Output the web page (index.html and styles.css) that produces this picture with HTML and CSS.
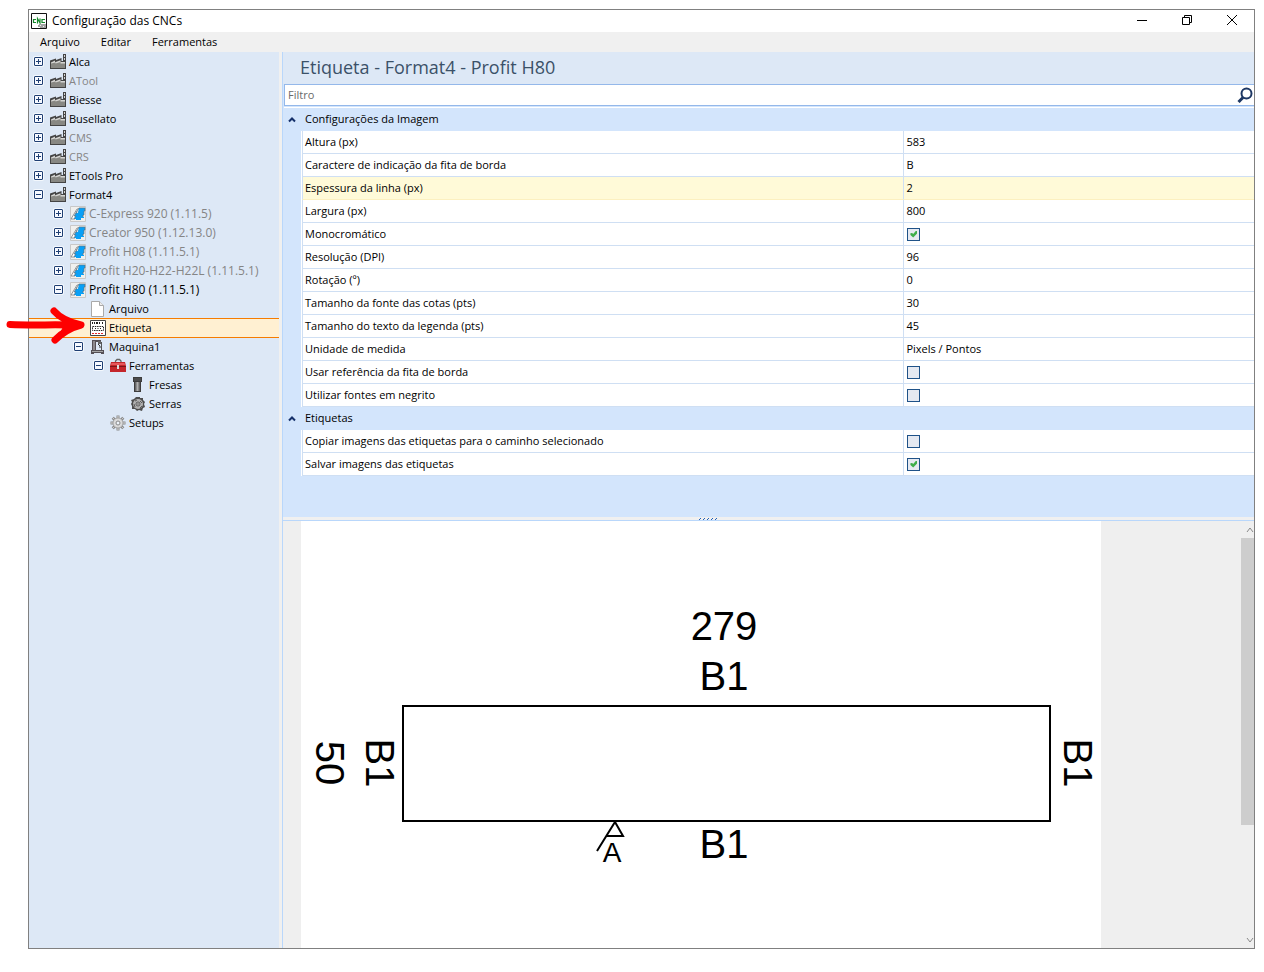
FILE: index.html
```html
<!DOCTYPE html>
<html lang="pt-BR">
<head>
<meta charset="utf-8">
<meta name="viewport" content="width=device-width, initial-scale=1">
<title>Configuração das CNCs</title>
<link rel="stylesheet" href="styles.css">
</head>
<body>
<svg class="sprite" aria-hidden="true">
  <defs>
    <linearGradient id="steel" x1="0" y1="0" x2="1" y2="0"><stop offset="0" stop-color="#555"/><stop offset=".5" stop-color="#b0b0b0"/><stop offset="1" stop-color="#555"/></linearGradient>
  </defs>
  <symbol id="factory" viewBox="0 0 16 16">
    <path d="M0 15V6.500L6 4.500V6l5.500-2v3H13V0h3v15z" fill="#454545"/>
    <path d="M1 8.500L5 6.500v1.700l5.500-2V8H15v2H1z" fill="#d6d6d3"/>
    <path d="M1 9.500l4.500-1v1L10.500 8v1.500H15V14H1z" fill="#888883"/>
    <path d="M14 1h1v2h-1zm0 3h1v2h-1z" fill="#d5d5d5"/>
    <path d="M0 14h16v1H0z" fill="#444"/>
  </symbol>
  <symbol id="brand" viewBox="0 0 16 16">
    <path d="M.5.5h15v15H.5z" fill="#f0f0ee" stroke="#c8c8c8"/>
    <path d="M1 13L7 3h3L5 13z" fill="#fff" stroke="#7d7d7d" stroke-width=".8"/>
    <path d="M9 2h6v3h-1v4h-1v2h1v1h-3v2H6v-1H4l1.500-3H4l2-3h2z" fill="#09a0f6"/>
    <path d="M9 2L4 10h2l-2 3M7 5l-1 3M9 2h6v3h-1v4h-1v2" fill="none" stroke="#5f7482" stroke-width=".7"/>
  </symbol>
  <symbol id="file" viewBox="0 0 16 16">
    <path d="M1.500.5h8l4 4v11h-12z" fill="#fff" stroke="#a9a9a9"/>
    <path d="M9.500.5v4h4" fill="#eee" stroke="#a9a9a9"/>
  </symbol>
  <symbol id="tag" viewBox="0 0 16 16">
    <path d="M.5.5h15v15H.5z" fill="#fff" stroke="#444"/>
    <path d="M2.500 2v2m2-2v2m2-2v2m1-2v2m2-2v2m3-2v2" stroke="#222"/>
    <path d="M2.500 6.500h11v4h-11z" stroke="#222" stroke-dasharray="1.500 .8" fill="none"/>
    <path d="M5 8.500h1m1.500 0h1m1.500 0h1" stroke="#222"/>
    <path d="M2 13.500h12" stroke="#e22a2a" stroke-dasharray="2 1"/>
  </symbol>
  <symbol id="machine" viewBox="0 0 16 16">
    <path d="M2 1h9v2H6v8h8v4h-3v-1H4v1H1v-4h1z" fill="#544f55"/>
    <path d="M3 2h2v9H3z" fill="#8d8a8e"/>
    <path d="M8 2h3v3H8z" fill="#666"/><path d="M8 5l2 2v2" fill="none" stroke="#333"/>
    <path d="M11.500 3v8" stroke="#555"/>
    <path d="M2 12.500h11" stroke="#a5a5a5"/>
  </symbol>
  <symbol id="toolbox" viewBox="0 0 16 16">
    <path d="M5.500 5V3L7 1.500h2.500L11 3v2" fill="none" stroke="#666" stroke-width="1.300"/>
    <path d="M1 4h14l1 4v6H0V8z" fill="#c4262b"/>
    <path d="M1.500 5h13l.5 2H1z" fill="#e5575a"/><path d="M0 8h16v1H0z" fill="#7b1519"/>
    <path d="M7 7h2v4H7z" fill="#ddd"/>
  </symbol>
  <symbol id="mill" viewBox="0 0 16 16">
    <path d="M3 0h9v5h-1v10H4V5H3z" fill="#3d3d3d"/><path d="M5 5h5v9H5z" fill="url(#steel)"/>
    <path d="M4 1h7v3H4z" fill="#4c4c4c"/>
  </symbol>
  <symbol id="saw" viewBox="0 0 16 16">
    <path d="M6 1h4v1h3v2l2 2-1 2 1 3-2 1-1 3-3-1-2 1-2-2H2v-3L1 8l1-2-1-2 3-1z" fill="#4d4d4d"/>
    <circle cx="8" cy="8" r="5" fill="#b0b0b0"/>
    <path d="M5 5l2-1m3 1l2 2M4 8l1 3m7-1l-2 2" stroke="#5a5a5a"/>
    <circle cx="8" cy="8" r="2" fill="#ddd" stroke="#555"/><circle cx="8" cy="8" r=".8" fill="#333"/>
  </symbol>
  <symbol id="gear" viewBox="0 0 16 16">
    <g stroke="#8b8b8b" stroke-width="3"><path d="M8 .5v15M.5 8h15M2.700 2.700l10.600 10.600M13.300 2.700L2.700 13.300"/></g>
    <g stroke="#dadada"><path d="M8 1v14M1 8h14M3.200 3.200l9.600 9.600M12.800 3.200l-9.600 9.600"/></g>
    <circle cx="8" cy="8" r="5" fill="#dadada" stroke="#999" stroke-width=".8"/>
    <circle cx="8" cy="8" r="2" fill="#eef3fa" stroke="#888"/>
  </symbol>
</svg>

<div class="window">
  <header class="titlebar">
    <svg class="app-icon" viewBox="0 0 16 16" aria-hidden="true">
      <path d="M.5.5h15v15H.5z" fill="#fff" stroke="#111"/>
      <path d="M5 6.500H2.500v3H5M6.500 10.500v-5l2.500 4.500V5.500M14 6.500h-3v3h3" fill="none" stroke="#16882b" stroke-width="1.200"/>
      <path d="M7 12h1v-1h7v4H9v-1H7z" fill="#a3a3a3"/><path d="M9 12.500h1m2 1h1" stroke="#eee"/>
    </svg>
    <h1>Configuração das CNCs</h1>
    <div class="window-buttons">
      <button type="button" aria-label="Minimizar"><svg viewBox="0 0 12 12"><path d="M1 5.500h10"/></svg></button>
      <button type="button" aria-label="Restaurar"><svg viewBox="0 0 12 12"><path d="M1.500 2.500h7v7h-7zM3.500 2.500v-2h7v7h-2"/></svg></button>
      <button type="button" aria-label="Fechar"><svg viewBox="0 0 12 12"><path d="M1 0l10 10M11 0L1 10"/></svg></button>
    </div>
  </header>
  <nav class="menubar">
    <button type="button">Arquivo</button><button type="button">Editar</button><button type="button">Ferramentas</button>
  </nav>
  <div class="workspace">
    <aside class="sidebar">
      <ul class="tree">
        <li><div class="node l1"><button class="toggle" type="button" aria-label="Expandir"></button><svg><use href="#factory"/></svg><span>Alca</span></div></li>
        <li><div class="node l1 off"><button class="toggle" type="button" aria-label="Expandir"></button><svg><use href="#factory"/></svg><span>ATool</span></div></li>
        <li><div class="node l1"><button class="toggle" type="button" aria-label="Expandir"></button><svg><use href="#factory"/></svg><span>Biesse</span></div></li>
        <li><div class="node l1"><button class="toggle" type="button" aria-label="Expandir"></button><svg><use href="#factory"/></svg><span>Busellato</span></div></li>
        <li><div class="node l1 off"><button class="toggle" type="button" aria-label="Expandir"></button><svg><use href="#factory"/></svg><span>CMS</span></div></li>
        <li><div class="node l1 off"><button class="toggle" type="button" aria-label="Expandir"></button><svg><use href="#factory"/></svg><span>CRS</span></div></li>
        <li><div class="node l1"><button class="toggle" type="button" aria-label="Expandir"></button><svg><use href="#factory"/></svg><span>ETools Pro</span></div></li>
        <li><div class="node l1"><button class="toggle open" type="button" aria-label="Recolher"></button><svg><use href="#factory"/></svg><span>Format4</span></div>
          <ul>
            <li><div class="node l2 off"><button class="toggle" type="button" aria-label="Expandir"></button><svg><use href="#brand"/></svg><span>C-Express 920 (1.11.5)</span></div></li>
            <li><div class="node l2 off"><button class="toggle" type="button" aria-label="Expandir"></button><svg><use href="#brand"/></svg><span>Creator 950 (1.12.13.0)</span></div></li>
            <li><div class="node l2 off"><button class="toggle" type="button" aria-label="Expandir"></button><svg><use href="#brand"/></svg><span>Profit H08 (1.11.5.1)</span></div></li>
            <li><div class="node l2 off"><button class="toggle" type="button" aria-label="Expandir"></button><svg><use href="#brand"/></svg><span>Profit H20-H22-H22L (1.11.5.1)</span></div></li>
            <li><div class="node l2"><button class="toggle open" type="button" aria-label="Recolher"></button><svg><use href="#brand"/></svg><span>Profit H80 (1.11.5.1)</span></div>
              <ul>
                <li><div class="node leaf3"><svg><use href="#file"/></svg><span>Arquivo</span></div></li>
                <li><div class="node leaf3 selected"><svg><use href="#tag"/></svg><span>Etiqueta</span></div></li>
                <li><div class="node l3"><button class="toggle open" type="button" aria-label="Recolher"></button><svg><use href="#machine"/></svg><span>Maquina1</span></div>
                  <ul>
                    <li><div class="node l4"><button class="toggle open" type="button" aria-label="Recolher"></button><svg><use href="#toolbox"/></svg><span>Ferramentas</span></div>
                      <ul>
                        <li><div class="node leaf5"><svg><use href="#mill"/></svg><span>Fresas</span></div></li>
                        <li><div class="node leaf5"><svg><use href="#saw"/></svg><span>Serras</span></div></li>
                      </ul>
                    </li>
                    <li><div class="node leaf4"><svg><use href="#gear"/></svg><span>Setups</span></div></li>
                  </ul>
                </li>
              </ul>
            </li>
          </ul>
        </li>
      </ul>
    </aside>
    <main class="panel">
      <h2>Etiqueta - Format4 - Profit H80</h2>
      <div class="filter">
        <input type="text" placeholder="Filtro" aria-label="Filtro">
        <button type="button" aria-label="Pesquisar"><svg viewBox="0 0 16 16"><circle cx="9.500" cy="6.500" r="5"/><path d="M6 10.500L1.500 15" class="handle"/></svg></button>
      </div>
      <div class="properties">
        <table>
          <colgroup><col class="c-gutter"><col class="c-name"><col class="c-value"></colgroup>
          <tbody>
            <tr class="group"><td><button type="button" aria-label="Recolher grupo"><svg viewBox="0 0 8 6"><path d="M1 4.500l3-3 3 3"/></svg></button></td><th colspan="2">Configurações da Imagem</th></tr>
            <tr><td></td><th>Altura (px)</th><td>583</td></tr>
            <tr><td></td><th>Caractere de indicação da fita de borda</th><td>B</td></tr>
            <tr class="active"><td></td><th>Espessura da linha (px)</th><td>2</td></tr>
            <tr><td></td><th>Largura (px)</th><td>800</td></tr>
            <tr><td></td><th><label for="mono">Monocromático</label></th><td><input type="checkbox" id="mono" checked></td></tr>
            <tr><td></td><th>Resolução (DPI)</th><td>96</td></tr>
            <tr><td></td><th>Rotação (º)</th><td>0</td></tr>
            <tr><td></td><th>Tamanho da fonte das cotas (pts)</th><td>30</td></tr>
            <tr><td></td><th>Tamanho do texto da legenda (pts)</th><td>45</td></tr>
            <tr><td></td><th>Unidade de medida</th><td>Pixels / Pontos</td></tr>
            <tr><td></td><th><label for="ref">Usar referência da fita de borda</label></th><td><input type="checkbox" id="ref"></td></tr>
            <tr><td></td><th><label for="bold">Utilizar fontes em negrito</label></th><td><input type="checkbox" id="bold"></td></tr>
          </tbody>
          <tbody>
            <tr class="group"><td><button type="button" aria-label="Recolher grupo"><svg viewBox="0 0 8 6"><path d="M1 4.500l3-3 3 3"/></svg></button></td><th colspan="2">Etiquetas</th></tr>
            <tr><td></td><th><label for="copy">Copiar imagens das etiquetas para o caminho selecionado</label></th><td><input type="checkbox" id="copy"></td></tr>
            <tr><td></td><th><label for="save">Salvar imagens das etiquetas</label></th><td><input type="checkbox" id="save" checked></td></tr>
          </tbody>
        </table>
      </div>
      <div class="splitter"><svg viewBox="0 0 20 3" aria-hidden="true"><path d="M0 3l2-2M4 3l2-2M8 3l2-2M12 3l2-2M16 3l2-2"/></svg></div>
      <section class="preview">
        <div class="canvas">
          <svg class="label-drawing" viewBox="0 0 800 583" role="img" aria-label="Pré-visualização da etiqueta">
            <rect x="102" y="185" width="647" height="115"/>
            <path d="M296 330L314 301L322 315H305"/>
            <g class="dims">
              <text x="423" y="119">279</text>
              <text x="423" y="169">B1</text>
              <text x="423" y="337">B1</text>
              <text transform="translate(15 242) rotate(90)">50</text>
              <text transform="translate(65 242) rotate(90)">B1</text>
              <text transform="translate(763 242) rotate(90)">B1</text>
              <text class="legend" x="311" y="341">A</text>
            </g>
          </svg>
        </div>
        <div class="scrollbar" aria-hidden="true">
          <svg viewBox="0 0 8 6"><path d="M1 5l3-4 3 4"/></svg>
          <div class="track"><div class="thumb"></div></div>
          <svg viewBox="0 0 8 6"><path d="M1 1l3 4 3-4"/></svg>
        </div>
      </section>
    </main>
  </div>
  <svg class="pointer" viewBox="0 0 80 40" aria-hidden="true">
    <path d="M4 18.500C25 19.500 45 18.500 62 19" stroke-width="7"/>
    <path d="M48 5C54 12 62 16 75 19C63 22 56 27 49 34" stroke-width="7"/>
    <path d="M52 8C60 14 70 17 78 19C68 21 58 25 52 31C56 25 57 22 57 19C57 16 55 12 52 8z" class="tip"/>
  </svg>
</div>
</body>
</html>
```
FILE: styles.css
```css
* { box-sizing: border-box; }

body {
  margin: 0;
  height: 100vh;
  padding: 9px 9px 23px 28px;
  background: #fff;
  color: #000;
  font: 11px/16px "Open Sans", "Noto Sans", sans-serif;
  overflow: hidden;
}

h1, h2, ul { margin: 0; padding: 0; font-weight: 400; list-style: none; }
button { margin: 0; padding: 0; border: 0; background: none; color: inherit; font: inherit; }
svg { display: block; flex: none; fill: none; }

.sprite { position: absolute; width: 0; height: 0; }

.window {
  position: relative;
  display: flex;
  flex-direction: column;
  height: 100%;
  border: 1px solid #808080;
  background: #f0f0f0;
}

.titlebar { display: flex; align-items: center; height: 22px; padding-left: 2px; background: #fff; }
.app-icon { width: 16px; height: 16px; }
.titlebar h1 { flex: 1; padding-left: 5px; font-size: 12px; }
.window-buttons { display: flex; }
.window-buttons button { display: grid; place-items: center; width: 45px; height: 20px; }
.window-buttons svg { width: 12px; height: 12px; stroke: #000; }

.menubar { display: flex; gap: 21px; height: 20px; padding-left: 11px; }
.menubar button { height: 20px; }

.workspace { display: flex; flex: 1; min-height: 0; }

.sidebar { flex: none; width: 250px; background: #dde8f6; }
.node { display: flex; align-items: center; height: 19px; }
.node > svg { width: 16px; height: 16px; margin-right: 3px; }
.l1 { padding-left: 5px; }
.l2 { padding-left: 25px; font-size: 12px; }
.l3 { padding-left: 45px; }
.l4 { padding-left: 65px; }
.leaf3 { padding-left: 61px; }
.leaf4 { padding-left: 81px; }
.leaf5 { padding-left: 101px; }
.off { color: #858585; }
.selected { background: #fff0d2; box-shadow: inset 0 1px #f57c00, 0 1px #f57c00; }

.toggle {
  width: 9px;
  height: 9px;
  margin-right: 7px;
  border: 1px solid #1f3f73;
  border-radius: 1px;
  background:
    linear-gradient(#1f3f73, #1f3f73) center / 5px 1px no-repeat,
    linear-gradient(#1f3f73, #1f3f73) center / 1px 5px no-repeat,
    #f6f9ff;
  box-shadow: 0 0 0 1px #f4f8fd;
}
.toggle.open { background: linear-gradient(#1f3f73, #1f3f73) center / 5px 1px no-repeat, #f6f9ff; }

.panel {
  display: flex;
  flex: 1;
  flex-direction: column;
  min-width: 0;
  margin-left: 3px;
  border-left: 1px solid #b9d7fb;
  background: #d3e5fc;
}
.panel h2 { height: 32px; padding-left: 17px; background: #dde8f6; color: #3b5168; font-size: 18px; line-height: 31px; }

.filter { display: flex; height: 22px; margin-left: 1px; border: 1px solid #94b8ea; border-right: 0; background: #fff; }
.filter input { flex: 1; min-width: 0; padding: 0 3px; border: 0; outline: 0; background: none; font: inherit; }
.filter input::placeholder { color: #6a6a6a; opacity: 1; }
.filter svg { width: 16px; height: 16px; margin-right: 1px; stroke: #1d3763; stroke-width: 2; }
.filter .handle { stroke-width: 3; }

.properties { flex: none; height: 411px; margin-left: 1px; padding-top: 1px; }
table { width: 100%; border-collapse: separate; border-spacing: 0; table-layout: fixed; border-top: 1px solid #fff; }
.c-gutter { width: 18px; }
.c-name { width: 62%; }
tr { height: 23px; }
th, td { padding: 0 2px; border-bottom: 1px solid #cfdff3; background: #fff; font-weight: 400; text-align: left; white-space: nowrap; }
th { border-left: 1px solid #cfdff3; }
td:last-child { border-left: 1px solid #cfdff3; }
td:first-child { border-right: 1px solid #fff; border-bottom: 0; background: #d3e5fc; }
.active th, .active td:last-child { border-bottom-color: #fcf0c0; background: #fffad8; }
.group th, .group td:first-child { border-color: #d3e5fc; background: #d3e5fc; }
.group button { display: block; margin-left: 2px; }
.group svg { width: 8px; height: 6px; stroke: #15306a; stroke-width: 2; }

input[type="checkbox"] {
  display: grid;
  place-items: center;
  width: 13px;
  height: 13px;
  margin: 0 1px;
  border: 1px solid #1f5288;
  background: #e5e9f1;
  appearance: none;
}
input[type="checkbox"]:checked::before {
  width: 7px;
  height: 7px;
  background: #3fae4a;
  clip-path: polygon(0 40%, 25% 35%, 40% 50%, 80% 5%, 100% 10%, 100% 40%, 40% 100%, 0 65%);
  content: "";
}

.splitter { display: flex; justify-content: center; height: 4px; padding-right: 120px; border-bottom: 1px solid #b9d7fb; background: #f0f0f0; }
.splitter svg { width: 20px; height: 3px; stroke: #1f62c0; }

.preview { display: flex; flex: 1; min-height: 0; background: #efefef; }
.canvas { flex: 1; min-width: 0; padding-left: 18px; overflow: hidden; }
.label-drawing { width: 800px; height: 583px; background: #fff; stroke: #000; stroke-width: 2; }
.dims { fill: #000; stroke: none; font: 40px "Liberation Sans", Arial, sans-serif; text-anchor: middle; }
.legend { font-size: 28px; }

.scrollbar { display: flex; flex-direction: column; width: 13px; }
.scrollbar svg { width: 8px; height: 6px; margin: 6px 0 5px 5px; stroke: #8a8a8a; stroke-width: 1; }
.track { flex: 1; }
.thumb { height: 73%; background: #cdcdcd; }

.pointer { position: absolute; top: 296px; left: -23px; width: 80px; height: 40px; stroke: #fe0000; stroke-linecap: round; stroke-linejoin: round; }
.tip { fill: #fe0000; }
```
